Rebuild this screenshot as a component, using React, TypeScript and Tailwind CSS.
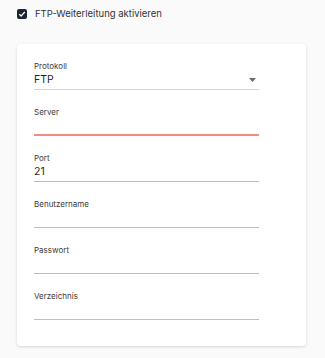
import React from "react";

function Field({ label, value, error, select }: { label: string; value?: string; error?: boolean; select?: boolean }) {
  return (
    <div className="flex flex-col w-[225px]">
      <div className="h-[10px] leading-[10px] text-[8px] text-[#3a3a3a]">{label}</div>
      <div
        className={
          "h-[19px] flex items-center justify-between text-[10.5px] text-[#1f1f1f] " +
          (error ? "border-b-2 border-[#f28b82]" : select ? "border-b border-[#d6d6d6]" : "border-b border-[#bdbdbd]")
        }
      >
        <span>{value}</span>
        {select && (
          <svg width="7" height="4" viewBox="0 0 7 4" className="mr-[3px]">
            <path d="M0 0 L7 0 L3.5 4 Z" fill="#6b6b6b" />
          </svg>
        )}
      </div>
    </div>
  );
}

export default function App() {
  return (
    <div className="w-[325px] h-[358px] bg-[#fafafa] overflow-hidden" style={{ fontFamily: "Inter, 'Noto Sans', sans-serif" }}>
      <div className="h-[28px] flex items-center pl-[17px] gap-[8px]">
        <div className="w-[10px] h-[10px] rounded-[2px] bg-[#1e2433] flex items-center justify-center">
          <svg width="8" height="8" viewBox="0 0 8 8">
            <path d="M1.3 4.2 L3.1 6 L6.8 2" stroke="#fff" strokeWidth="1.3" fill="none" />
          </svg>
        </div>
        <span className="text-[9.5px] text-[#333]">FTP-Weiterleitung aktivieren</span>
      </div>
      <div className="ml-[17px] mt-[16px] w-[289px] h-[302px] bg-white rounded-[4px] shadow-[0_1px_3px_rgba(0,0,0,0.15)] pt-[17px] pl-[17px] flex flex-col gap-[17px]">
        <Field label="Protokoll" value="FTP" select />
        <Field label="Server" error />
        <Field label="Port" value="21" />
        <Field label="Benutzername" />
        <Field label="Passwort" />
        <Field label="Verzeichnis" />
      </div>
    </div>
  );
}
